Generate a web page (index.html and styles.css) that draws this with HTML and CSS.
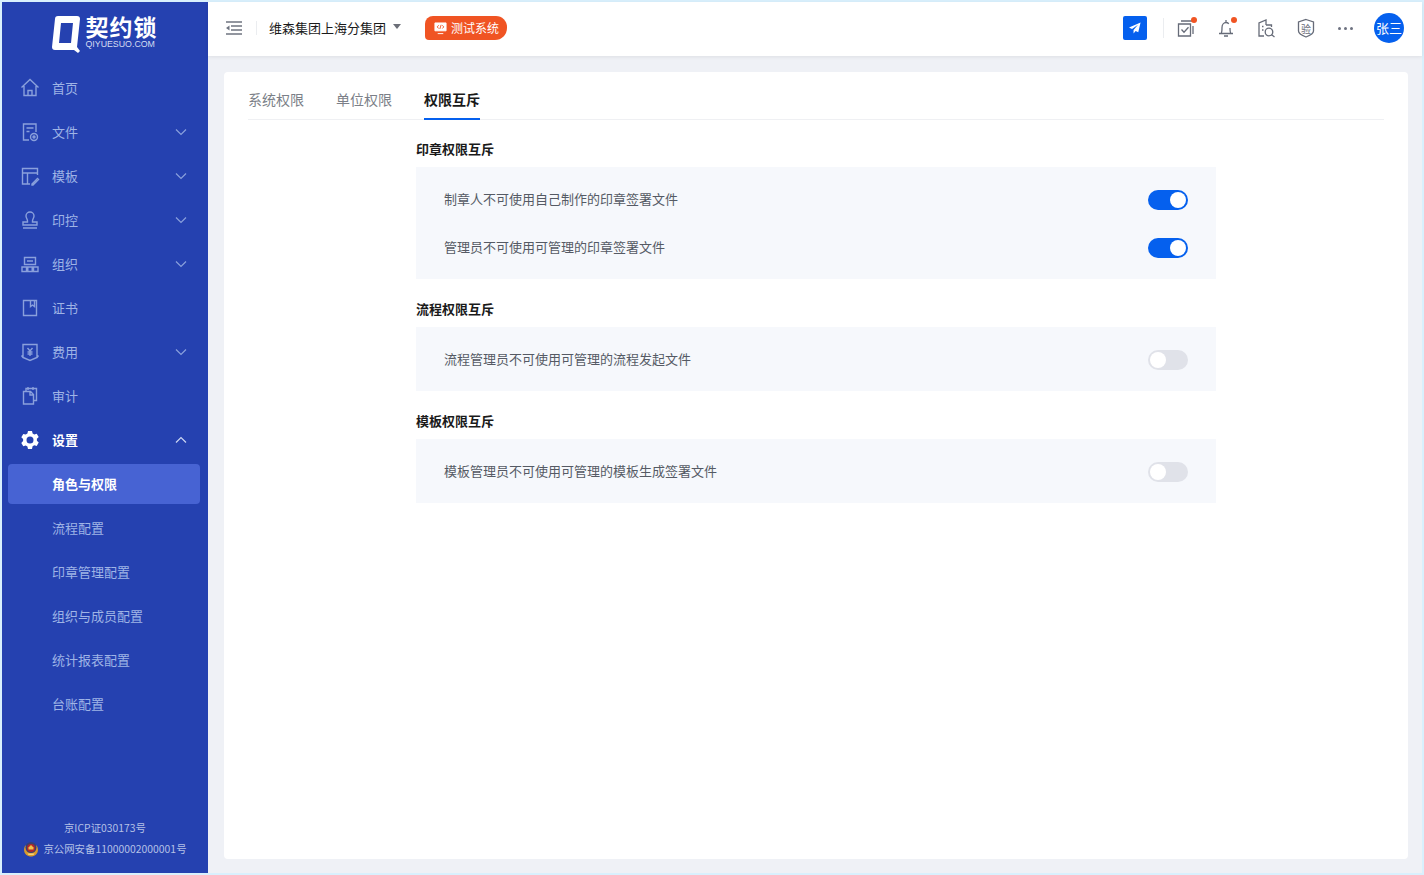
FILE: index.html
```html
<!DOCTYPE html>
<html lang="zh-CN">
<head>
    <meta charset="UTF-8">
    <meta name="viewport" content="width=device-width, initial-scale=1.0">
    <title>权限互斥</title>
    <link rel="stylesheet" href="styles.css">
</head>
<body>
    <div class="app">
        <aside class="sidebar">
            <div class="logo">
                <svg class="logo-mark" viewBox="0 0 28 38" width="28" height="38">
                    <path d="M6 1h19c2 0 3 1 3 3l-3 28 3 4-2 2-4-3H3c-2 0-3-1-3-3L3 4c0-2 1-3 3-3zm3 7L7 28h12l2-20z" fill="#fff" fill-rule="evenodd"/>
                </svg>
                <div class="logo-text">
                    <div class="logo-name">契约锁</div>
                    <div class="logo-sub">QIYUESUO.COM</div>
                </div>
            </div>
            <nav class="menu">
                <div class="menu-item">
                    <svg class="menu-icon" viewBox="0 0 20 20"><path d="M1.500 9.500 10 1.500l8.500 8M4 8v9.500h12V8M8 17.500v-5h4v5"/></svg>
                    <span class="menu-label">首页</span>
                </div>
                <div class="menu-item">
                    <svg class="menu-icon" viewBox="0 0 20 20"><path d="M9 18H3.500V2h12.500v8M6.500 6h7M6.500 9.500h3"/><circle cx="14" cy="15" r="3.500"/><circle cx="14" cy="15" r="1"/></svg>
                    <span class="menu-label">文件</span>
                    <svg class="menu-arrow" viewBox="0 0 12 8"><path d="M1 1.500l5 5 5-5"/></svg>
                </div>
                <div class="menu-item">
                    <svg class="menu-icon" viewBox="0 0 20 20"><path d="M10 18H2.500V2.500h15V9M2.500 7h15M7.500 7v11M12 18l5.500-5.500 1 1L13 19h-1z"/></svg>
                    <span class="menu-label">模板</span>
                    <svg class="menu-arrow" viewBox="0 0 12 8"><path d="M1 1.500l5 5 5-5"/></svg>
                </div>
                <div class="menu-item">
                    <svg class="menu-icon" viewBox="0 0 20 20"><path d="M7.500 11c0-2-1.500-3-1.500-5a4 4 0 0 1 8 0c0 2-1.500 3-1.500 5v1H17v3H3v-3h4.500zM3 18h14"/></svg>
                    <span class="menu-label">印控</span>
                    <svg class="menu-arrow" viewBox="0 0 12 8"><path d="M1 1.500l5 5 5-5"/></svg>
                </div>
                <div class="menu-item">
                    <svg class="menu-icon" viewBox="0 0 20 20"><path d="M4.500 3.500h11v7h-11zM7 7h6M2 13h4.500v4.500H2zM7.800 13h4.400v4.500H7.800zM13.500 13H18v4.500h-4.500z"/></svg>
                    <span class="menu-label">组织</span>
                    <svg class="menu-arrow" viewBox="0 0 12 8"><path d="M1 1.500l5 5 5-5"/></svg>
                </div>
                <div class="menu-item">
                    <svg class="menu-icon" viewBox="0 0 20 20"><path d="M3.500 2.500h13v15h-13zM10.500 2.500v6l2-1.500 2 1.500v-6"/></svg>
                    <span class="menu-label">证书</span>
                </div>
                <div class="menu-item">
                    <svg class="menu-icon" viewBox="0 0 20 20"><path d="M3 2.500h14v13l-7 3-7-3zM1.500 13.500 3 15.500M18.500 13.500 17 15.500M7.500 6 10 9l2.500-3M10 9v5M7.500 10h5M7.500 12h5"/></svg>
                    <span class="menu-label">费用</span>
                    <svg class="menu-arrow" viewBox="0 0 12 8"><path d="M1 1.500l5 5 5-5"/></svg>
                </div>
                <div class="menu-item">
                    <svg class="menu-icon" viewBox="0 0 20 20"><path d="M3.500 5.500h7l3 3v9.500h-10zM10 5.500v3.500h3.500M6 5.500V2.500h10.500v12h-3M8 1v3M13 1v3"/></svg>
                    <span class="menu-label">审计</span>
                </div>
                <div class="menu-item menu-item-open">
                    <svg class="menu-icon menu-icon-fill" viewBox="0 0 20 20"><path fill-rule="evenodd" d="M8 1h4l.6 2.400 1.700 1 2.400-.7 2 3.400-1.800 1.700v2l1.800 1.700-2 3.400-2.400-.7-1.700 1L12 19H8l-.6-2.400-1.700-1-2.400.7-2-3.400L3.100 11V9L1.300 7.300l2-3.400 2.400.7 1.700-1zM10 6.500a3.500 3.500 0 1 0 0 7 3.500 3.500 0 0 0 0-7z"/></svg>
                    <span class="menu-label">设置</span>
                    <svg class="menu-arrow" viewBox="0 0 12 8"><path d="M1 6.500l5-5 5 5"/></svg>
                </div>
                <div class="sub-item sub-item-active"><span class="sub-label">角色与权限</span></div>
                <div class="sub-item"><span class="sub-label">流程配置</span></div>
                <div class="sub-item"><span class="sub-label">印章管理配置</span></div>
                <div class="sub-item"><span class="sub-label">组织与成员配置</span></div>
                <div class="sub-item"><span class="sub-label">统计报表配置</span></div>
                <div class="sub-item"><span class="sub-label">台账配置</span></div>
            </nav>
            <div class="record">
                <div>京ICP证030173号</div>
                <div class="record-line">
                    <svg class="badge-icon" viewBox="0 0 16 16" width="16" height="16">
                        <path d="M2.500 4.500C.5 7 .5 11 3 13.500c1.500 1.500 3.500 2 5 2s3.500-.5 5-2c2.500-2.500 2.500-6.500.5-9z" fill="#d99a2b"/>
                        <circle cx="8" cy="6.500" r="5.500" fill="#39406f"/>
                        <circle cx="8" cy="7" r="4" fill="#b3262b"/>
                        <path d="M5.500 6.500 8 4l2.500 2.500v2h-5z" fill="#efc24a"/>
                        <path d="M4.500 12.500h7l-1 1.500h-5z" fill="#f2d27a"/>
                    </svg>
                    <span>京公网安备11000002000001号</span>
                </div>
            </div>
        </aside>

        <div class="main">
            <header class="topbar">
                <svg class="fold-icon" viewBox="0 0 16 14" width="16" height="14"><path d="M0 1h16M5 5h11M5 9h11M0 13h16"/><path class="fold-tri" d="M0 7l3.500-2.500v5z"/></svg>
                <span class="top-divider"></span>
                <span class="company">维森集团上海分集团</span>
                <span class="caret"></span>
                <span class="env-tag">
                    <svg viewBox="0 0 14 14" width="13" height="13"><path d="M1 1h12v8.500H1zM4 12.500h6" fill="#fff" stroke="#fff"/><path d="M5 3.500 3.500 5.300 5 7M9 3.500l1.500 1.800L9 7M7.700 3 6.300 7.500" fill="none" stroke="#f05423"/></svg>
                    <span class="env-label">测试系统</span>
                </span>
                <div class="top-actions">
                    <span class="send-btn">
                        <svg viewBox="0 0 14 14" width="12" height="12"><path d="M13.500.5 0 6.500l3.500 1.800 7-5-5.200 6v4l2.500-2.700 3 1.400z" fill="#fff"/></svg>
                    </span>
                    <span class="top-divider top-divider-right"></span>
                    <span class="top-icon">
                        <svg viewBox="0 0 20 20"><path d="M2.500 6h12v12h-12zM5 3h12M17 8v8M5.500 11.500l2.500 2.800 4.500-5"/></svg>
                        <i class="dot"></i>
                    </span>
                    <span class="top-icon">
                        <svg viewBox="0 0 20 20"><path d="M3 15.500h14M5 15.500c1-1 1-3 1-6 0-3 2-5 4-5 1 0 2 .5 2.800 1.300M15 15.500c-1-1-1-3-1-5.500M8 18h4M10 2v2.500"/></svg>
                        <i class="dot"></i>
                    </span>
                    <span class="top-icon">
                        <svg viewBox="0 0 20 20"><path d="M8 18H3V5l7-3v5M10 7h5.500v2M6 8.500h1.500M6 12h1.500"/><circle cx="13" cy="14" r="3.800"/><path d="M16 17l2.500 2"/></svg>
                    </span>
                    <span class="top-icon">
                        <svg viewBox="0 0 20 20"><path d="M10 1.500l7.500 2.500v9c0 2-3.500 4.500-7.500 6-4-1.500-7.500-4-7.500-6V4z"/></svg>
                        <span class="verify-text">验</span>
                    </span>
                    <span class="more"><i></i><i></i><i></i></span>
                    <span class="avatar"><span class="avatar-label">张三</span></span>
                </div>
            </header>

            <main class="content">
                <div class="card">
                    <div class="tabs">
                        <div class="tab">系统权限</div>
                        <div class="tab">单位权限</div>
                        <div class="tab tab-active">权限互斥</div>
                    </div>
                    <div class="settings">
                        <h3 class="group-title">印章权限互斥</h3>
                        <div class="group">
                            <div class="row">
                                <span class="row-label">制章人不可使用自己制作的印章签署文件</span>
                                <span class="switch switch-on"></span>
                            </div>
                            <div class="row">
                                <span class="row-label">管理员不可使用可管理的印章签署文件</span>
                                <span class="switch switch-on"></span>
                            </div>
                        </div>
                        <h3 class="group-title">流程权限互斥</h3>
                        <div class="group">
                            <div class="row">
                                <span class="row-label">流程管理员不可使用可管理的流程发起文件</span>
                                <span class="switch"></span>
                            </div>
                        </div>
                        <h3 class="group-title">模板权限互斥</h3>
                        <div class="group">
                            <div class="row">
                                <span class="row-label">模板管理员不可使用可管理的模板生成签署文件</span>
                                <span class="switch"></span>
                            </div>
                        </div>
                    </div>
                </div>
            </main>
        </div>
    </div>
</body>
</html>
```

FILE: styles.css
```css
* {
    margin: 0;
    padding: 0;
    box-sizing: border-box;
}

html, body {
    height: 100%;
}

body {
    background-color: #d9f0fd;
    font-family: "Noto Sans CJK SC", "Noto Sans", sans-serif;
    font-size: 13px;
    overflow: hidden;
}

.app {
    display: flex;
    height: 875px;
    width: 1424px;
    padding: 2px;
}

/* sidebar */
.sidebar {
    display: flex;
    flex-flow: column;
    width: 206px;
    background-color: #2541b0;
    color: #9fb4e6;
}

.logo {
    display: flex;
    justify-content: center;
    align-items: center;
    gap: 6px;
    height: 64px;
    padding-right: 1px;
    color: #fff;
}

.logo-text {
    padding-bottom: 6px;
}

.logo-name {
    font-size: 23px;
    font-weight: 700;
    line-height: 26px;
    letter-spacing: 1px;
}

.logo-sub {
    font-family: "Liberation Sans", sans-serif;
    font-size: 8.800px;
    line-height: 11px;
    color: #d5dcf2;
}

.menu {
    flex: 1;
}

.menu-item {
    display: flex;
    align-items: center;
    height: 44px;
    padding: 0 21px 0 18px;
}

.menu-icon {
    width: 20px;
    height: 20px;
    margin-right: 12px;
    fill: none;
    stroke: #8aa0dc;
    stroke-width: 1.400;
}

.menu-icon-fill {
    fill: #fff;
    stroke: none;
}

.menu-label {
    flex: 1;
    padding-bottom: 2px;
}

.menu-arrow {
    width: 12px;
    height: 8px;
    fill: none;
    stroke: #8aa0dc;
    stroke-width: 1.200;
}

.menu-item-open {
    color: #fff;
    font-weight: 700;
}

.menu-item-open .menu-arrow {
    stroke: #ccd6f2;
}

.sub-item {
    display: flex;
    align-items: center;
    height: 40px;
    margin: 2px 8px 4px 6px;
    padding-left: 44px;
    border-radius: 4px;
}

.sub-label {
    padding-bottom: 2px;
}

.sub-item-active {
    background-color: #4763d3;
    color: #fff;
    font-weight: 700;
}

.record {
    padding-bottom: 14px;
    font-size: 10.400px;
    line-height: 21px;
    text-align: center;
    color: #b4c0e6;
}

.record-line {
    display: flex;
    justify-content: center;
    align-items: center;
    gap: 4px;
}

/* top bar */
.main {
    display: flex;
    flex-flow: column;
    flex: 1;
    min-width: 0;
    background-color: #eff1f6;
}

.topbar {
    display: flex;
    align-items: center;
    height: 54px;
    padding: 0 18px 2px 18px;
    background-color: #fff;
    box-shadow: 0 1px 4px rgba(0, 0, 0, 0.08);
    color: #1a1a1a;
}

.fold-icon {
    stroke: #6f7480;
    stroke-width: 1.500;
    fill: none;
}

.fold-tri {
    fill: #6f7480;
    stroke: none;
}

.top-divider {
    width: 1px;
    height: 14px;
    margin: 0 12px 0 14px;
    background-color: #ebedf0;
}

.top-divider-right {
    height: 20px;
    margin: 0 12px 0 16px;
}

.company {
    padding-bottom: 1px;
    font-size: 13px;
}

.caret {
    width: 0;
    height: 0;
    margin: 0 24px 3px 7px;
    border-style: solid;
    border-width: 5px 4.500px 0;
    border-color: #6c6f78 transparent transparent;
}

.env-tag {
    display: flex;
    align-items: center;
    gap: 4px;
    width: 82px;
    height: 24px;
    padding-left: 9px;
    background-color: #f05423;
    border-radius: 8px 11px 12px 4px;
    color: #fff;
    font-size: 12px;
}

.env-label {
    padding-bottom: 1px;
}

.top-actions {
    display: flex;
    align-items: center;
    margin-left: auto;
}

.send-btn {
    display: flex;
    justify-content: center;
    align-items: center;
    width: 24px;
    height: 24px;
    background-color: #0560ee;
    border-radius: 2px;
}

.top-icon {
    position: relative;
    display: flex;
    justify-content: center;
    align-items: center;
    width: 20px;
    height: 20px;
    margin-right: 20px;
}

.top-icon svg {
    width: 20px;
    height: 20px;
    fill: none;
    stroke: #666b78;
    stroke-width: 1.300;
}

.dot {
    position: absolute;
    top: -1px;
    right: -1px;
    width: 6px;
    height: 6px;
    background-color: #f05423;
    border-radius: 50%;
}

.verify-text {
    position: absolute;
    font-size: 10px;
    color: #666b78;
}

.more {
    display: flex;
    gap: 3px;
    width: 16px;
    margin: 0 20px 0 2px;
}

.more i {
    width: 3px;
    height: 3px;
    background-color: #6d7280;
    border-radius: 50%;
}

.avatar {
    display: flex;
    justify-content: center;
    align-items: center;
    width: 30px;
    height: 30px;
    background-color: #0560ee;
    border-radius: 50%;
    color: #fff;
    font-size: 13px;
}

.avatar-label {
    padding-bottom: 1px;
}

/* content */
.content {
    flex: 1;
    padding: 16px 14px 14px 16px;
}

.card {
    height: 100%;
    padding: 16px 24px;
    background-color: #fff;
    border-radius: 4px;
}

.tabs {
    display: flex;
    gap: 32px;
    height: 32px;
    border-bottom: 1px solid #eff0f3;
    font-size: 14px;
    color: #7b7f88;
}

.tab {
    height: 32px;
    line-height: 22px;
}

.tab-active {
    border-bottom: 2px solid #0560ee;
    color: #1a1a1a;
    font-weight: 700;
}

.settings {
    width: 800px;
    margin: 0 auto;
}

.group-title {
    display: flex;
    align-items: flex-end;
    height: 47px;
    padding-bottom: 8px;
    font-size: 13px;
    line-height: 20px;
    font-weight: 700;
    color: #1a1a1a;
}

.group {
    padding: 8px 28px;
    background-color: #f6f8fc;
    color: #555a64;
}

.group + .group-title {
    height: 48px;
}

.row {
    display: flex;
    justify-content: space-between;
    align-items: center;
    height: 48px;
}

.row-label {
    padding-bottom: 2px;
}

.switch {
    position: relative;
    width: 40px;
    height: 20px;
    margin-top: 2px;
    background-color: #e0e2e9;
    border-radius: 10px;
}

.switch::after {
    content: "";
    position: absolute;
    top: 2px;
    left: 2px;
    width: 16px;
    height: 16px;
    background-color: #fff;
    border-radius: 50%;
}

.switch-on {
    background-color: #0560ee;
}

.switch-on::after {
    left: 22px;
}
```
